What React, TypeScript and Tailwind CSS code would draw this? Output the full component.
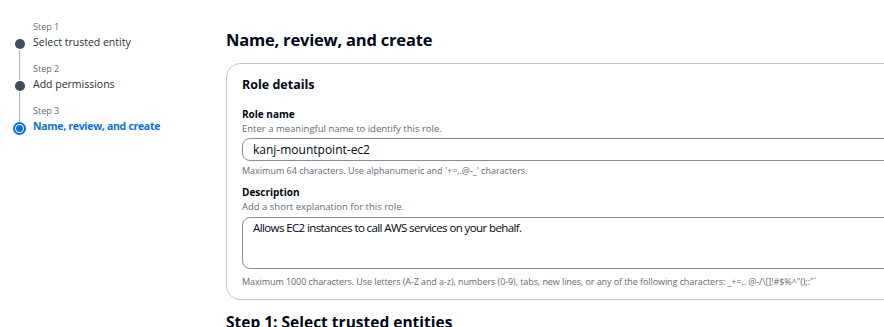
export default function App() {
  const steps = [
    { step: 'Step 1', name: 'Select trusted entity', done: true },
    { step: 'Step 2', name: 'Add permissions', done: true },
    { step: 'Step 3', name: 'Name, review, and create', done: false },
  ];

  return (
    <div
      className="w-[884px] h-[327px] overflow-hidden bg-white flex text-[#000716]"
      style={{ fontFamily: '"Open Sans", Roboto, sans-serif' }}
    >
      {/* Wizard steps */}
      <div className="w-[226px] shrink-0 pl-[13px] pt-[20px]">
        {steps.map((s, i) => (
          <div key={s.step} className="flex">
            <div className="w-[13px] flex flex-col items-center mr-[7px]">
              <div className="h-[18px] w-px" style={{ background: i === 0 ? 'transparent' : '#b4b4bb' }} />
              {s.done ? (
                <div className="w-[10px] h-[10px] rounded-full bg-[#414d5c] my-[1px]" />
              ) : (
                <div className="w-[13px] h-[13px] rounded-full border-2 border-[#0972d3] flex items-center justify-center">
                  <div className="w-[7px] h-[7px] rounded-full bg-[#0972d3]" />
                </div>
              )}
              {i < steps.length - 1 && <div className="flex-1 w-px bg-[#b4b4bb]" />}
            </div>
            <div className="pb-[12px]">
              <div className="text-[9px] leading-[14px] text-[#5f6b7a]">{s.step}</div>
              <div
                className={
                  s.done
                    ? 'text-[10.5px] leading-[16px] text-[#232f3e]'
                    : 'text-[10.5px] leading-[16px] font-bold tracking-[-0.3px] text-[#0972d3]'
                }
              >
                {s.name}
              </div>
            </div>
          </div>
        ))}
      </div>

      {/* Main */}
      <div className="flex-1 pt-[28px]">
        <h1 className="text-[16.5px] leading-[24px] font-bold tracking-[-0.2px]">Name, review, and create</h1>
        <div className="mt-[11px] w-[700px] border border-[#c6c6cd] rounded-[14px] pl-[15px] pt-[11px] pb-[11px]">
          <h2 className="text-[12.5px] leading-[20px] font-bold">Role details</h2>

          <div className="mt-[12px]">
            <div className="text-[10px] leading-[15px] font-bold">Role name</div>
            <div className="text-[9.5px] leading-[13px] text-[#5f6b7a]">Enter a meaningful name to identify this role.</div>
            <div className="mt-[3px] h-[23px] border border-[#8c8c94] rounded-[8px] px-[10px] flex items-center text-[12px]">
              kanj-mountpoint-ec2
            </div>
            <div className="mt-[3px] text-[9px] leading-[13px] text-[#5f6b7a]">
              Maximum 64 characters. Use alphanumeric and '+=,.@-_' characters.
            </div>
          </div>

          <div className="mt-[8px]">
            <div className="text-[10px] leading-[15px] font-bold">Description</div>
            <div className="text-[9.5px] leading-[13px] text-[#5f6b7a]">Add a short explanation for this role.</div>
            <div className="mt-[4px] h-[52px] border border-[#8c8c94] rounded-[8px] px-[10px] pt-[1px] text-[11.5px] leading-[18px] tracking-[-0.6px]">
              Allows EC2 instances to call AWS services on your behalf.
            </div>
            <div className="mt-[6px] text-[9px] leading-[13px] text-[#5f6b7a] tracking-[-0.08px]">
              Maximum 1000 characters. Use letters (A-Z and a-z), numbers (0-9), tabs, new lines, or any of the following characters: _+=,. @-/\[{}]!#$%^"();:"`
            </div>
          </div>
        </div>
        <h2 className="mt-[12px] text-[15.5px] leading-[20px] font-bold">Step 1: Select trusted entities</h2>
      </div>
    </div>
  );
}
